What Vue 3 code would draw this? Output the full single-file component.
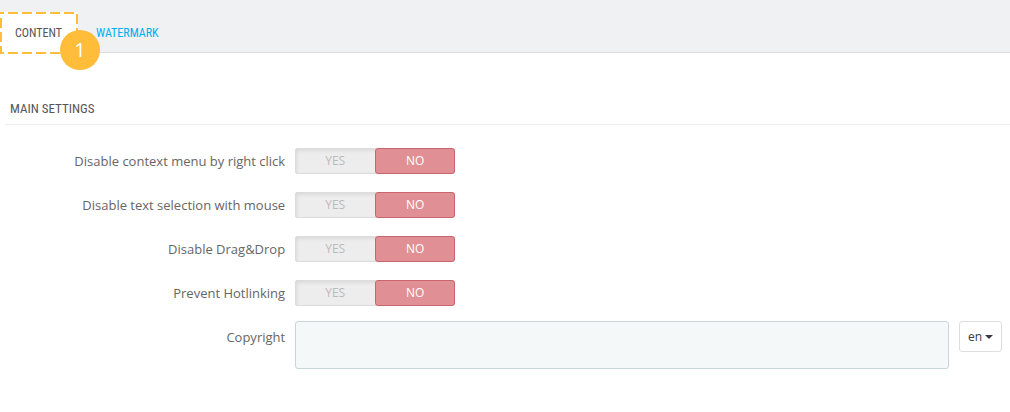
<script setup>
import { ref, reactive } from 'vue'

const tabs = [
  { id: 'content', label: 'CONTENT', step: 1 },
  { id: 'watermark', label: 'WATERMARK' },
]
const active = ref('content')

const switches = reactive([
  { id: 'context', label: 'Disable context menu by right click', value: 'no' },
  { id: 'selection', label: 'Disable text selection with mouse', value: 'no' },
  { id: 'dragdrop', label: 'Disable Drag&Drop', value: 'no' },
  { id: 'hotlink', label: 'Prevent Hotlinking', value: 'no' },
])
const copyright = ref('')
const language = ref('en')
</script>

<template>
  <div class="page">
    <nav class="tabs">
      <a
        v-for="tab in tabs"
        :key="tab.id"
        :href="'#' + tab.id"
        class="tab"
        :class="{ active: active === tab.id }"
        @click.prevent="active = tab.id"
      >
        {{ tab.label }}
        <template v-if="tab.step">
          <svg class="outline" aria-hidden="true">
            <rect x="1" y="1" />
          </svg>
          <span class="step">{{ tab.step }}</span>
        </template>
      </a>
    </nav>

    <form class="panel" @submit.prevent>
      <h3 class="heading">MAIN SETTINGS</h3>

      <div
        v-for="item in switches"
        :key="item.id"
        class="row"
        role="radiogroup"
        :aria-labelledby="item.id + '-label'"
      >
        <span :id="item.id + '-label'" class="label">{{ item.label }}</span>
        <div class="switch">
          <template v-for="option in ['yes', 'no']" :key="option">
            <input
              :id="item.id + '-' + option"
              v-model="item.value"
              type="radio"
              :name="item.id"
              :value="option"
            />
            <label :for="item.id + '-' + option" :class="option">{{ option.toUpperCase() }}</label>
          </template>
        </div>
      </div>

      <div class="row">
        <label class="label" for="copyright">Copyright</label>
        <textarea id="copyright" v-model="copyright" class="textarea"></textarea>
        <div class="language">
          <select v-model="language" aria-label="Language">
            <option value="en">en</option>
          </select>
          <svg class="caret" viewBox="0 0 8 4" aria-hidden="true"><path d="M0 0h8L4 4z" /></svg>
        </div>
      </div>
    </form>
  </div>
</template>

<style>
body {
  background: #fff;
}
</style>

<style scoped>
.page {
  font-family: "Open Sans", "Noto Sans", sans-serif;
  font-size: 13px;
  line-height: 18px;
  color: #666;
}

.page *,
.page {
  box-sizing: border-box;
}

.tabs {
  display: flex;
  align-items: flex-end;
  padding-top: 12px;
  background: #eff1f3;
  border-bottom: 1px solid #dcdde0;
}

.tab {
  position: relative;
  padding: 2px 18px 0;
  font-family: "Roboto Condensed", "Liberation Sans Narrow", Roboto, sans-serif;
  font-size: 12px;
  line-height: 38px;
  color: #00aff0;
  text-decoration: none;
}

.tab.active {
  margin-bottom: -2px;
  padding: 2px 16px 2px 15px;
  color: #555;
  background: #fff;
}

.outline {
  position: absolute;
  inset: 0;
  width: 100%;
  height: 100%;
}

.outline rect {
  width: calc(100% - 2px);
  height: calc(100% - 2px);
  fill: none;
  stroke: #ffbd39;
  stroke-width: 2;
  stroke-dasharray: 10 4;
  stroke-dashoffset: 7;
}

.step {
  position: absolute;
  right: -22px;
  bottom: -16px;
  z-index: 1;
  width: 40px;
  height: 40px;
  border-radius: 50%;
  background: #ffbd39;
  color: #fff;
  font-family: "Open Sans", "Noto Sans", sans-serif;
  font-size: 20px;
  line-height: 40px;
  text-align: center;
}

.panel {
  padding: 42px 0 0 5px;
}

.heading {
  margin: 0 0 16px;
  padding: 0 5px 1px;
  border-bottom: 1px solid #eee;
  font-family: "Roboto Condensed", "Liberation Sans Narrow", Roboto, sans-serif;
  font-size: 13px;
  font-weight: 400;
  line-height: 28px;
  color: #555;
}

.row {
  display: flex;
  align-items: flex-start;
  margin-bottom: 8px;
  padding-right: 8px;
}

.label {
  width: 28.1%;
  padding: 11px 0 7px;
  text-align: right;
}

.switch {
  display: grid;
  grid-template-columns: 80px 80px;
  margin: 7px 0 3px 10px;
  border-radius: 3px;
  background: #ededed;
  box-shadow: inset 0 0 0 1px #dcdcdc, inset 1px 2px 4px #d4d4d4;
}

.switch input {
  position: absolute;
  opacity: 0;
  pointer-events: none;
}

.switch label {
  border: 1px solid transparent;
  border-radius: 3px;
  color: #bbb;
  font-size: 12px;
  line-height: 24px;
  text-align: center;
  cursor: pointer;
}

.switch input:checked + label {
  color: #fff;
  background: #e08f95;
  border-color: #c9666d;
}

.switch input:checked + .yes {
  background: #92d097;
  border-color: #6cb273;
}

.textarea {
  flex: 1;
  height: 48px;
  margin: 4px 10px 0;
  padding: 6px 8px;
  border: 1px solid #c7d6db;
  border-radius: 3px;
  background: #f5f8f9;
  color: #555;
  font: inherit;
  resize: none;
}

.language {
  position: relative;
  margin-top: 4px;
}

.language select {
  display: block;
  appearance: none;
  width: 43px;
  height: 31px;
  padding: 0 8px;
  border: 1px solid #dedede;
  border-radius: 3px;
  background: #fff;
  color: #363a41;
  font-family: inherit;
  font-size: 12px;
}

.caret {
  position: absolute;
  top: 14px;
  right: 9px;
  width: 8px;
  height: 4px;
  fill: #363a41;
  pointer-events: none;
}
</style>
